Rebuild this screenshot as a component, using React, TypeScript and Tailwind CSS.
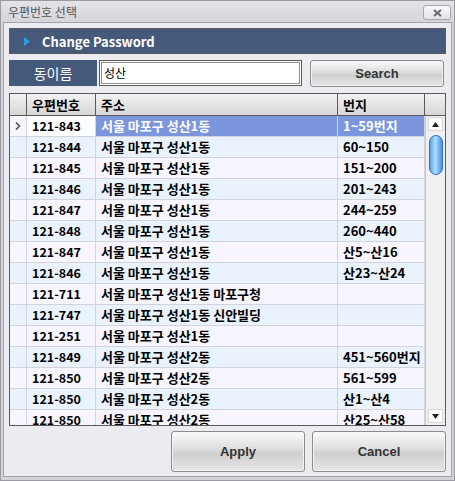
import React from "react";

type Row = { zip: string; addr: string; bunji: string };

const rows: Row[] = [
  { zip: "121-843", addr: "서울 마포구 성산1동", bunji: "1~59번지" },
  { zip: "121-844", addr: "서울 마포구 성산1동", bunji: "60~150" },
  { zip: "121-845", addr: "서울 마포구 성산1동", bunji: "151~200" },
  { zip: "121-846", addr: "서울 마포구 성산1동", bunji: "201~243" },
  { zip: "121-847", addr: "서울 마포구 성산1동", bunji: "244~259" },
  { zip: "121-848", addr: "서울 마포구 성산1동", bunji: "260~440" },
  { zip: "121-847", addr: "서울 마포구 성산1동", bunji: "산5~산16" },
  { zip: "121-846", addr: "서울 마포구 성산1동", bunji: "산23~산24" },
  { zip: "121-711", addr: "서울 마포구 성산1동 마포구청", bunji: "" },
  { zip: "121-747", addr: "서울 마포구 성산1동 신안빌딩", bunji: "" },
  { zip: "121-251", addr: "서울 마포구 성산1동", bunji: "" },
  { zip: "121-849", addr: "서울 마포구 성산2동", bunji: "451~560번지" },
  { zip: "121-850", addr: "서울 마포구 성산2동", bunji: "561~599" },
  { zip: "121-850", addr: "서울 마포구 성산2동", bunji: "산1~산4" },
  { zip: "121-850", addr: "서울 마포구 성산2동", bunji: "산25~산58" },
];

const btn =
  "flex items-center justify-center rounded-[3px] border border-[#8c8c8c] bg-[linear-gradient(#fbfbfb,#dcdcdc_45%,#cfcfcf_55%,#e6e6e6)] shadow-[inset_0_0_0_1px_#f4f4f4] font-['Liberation_Sans',sans-serif] font-bold text-[#333]";

function WinButton({ label, className }: { label: string; className: string }) {
  return <div className={`${btn} ${className}`}>{label}</div>;
}

export default function App() {
  return (
    <div className="w-[455px] h-[481px] flex flex-col bg-[#d2d2d7] border border-[#9a9aa2] font-['Noto_Sans_CJK_KR',sans-serif] overflow-hidden">
      {/* title bar */}
      <div className="h-[21px] flex items-center justify-between pl-[7px] pr-[3px] bg-[linear-gradient(#e4e4e8,#d4d4d9)]">
        <span className="text-[12px] text-[#555]">우편번호 선택</span>
        <div className="w-[28px] h-[15px] mt-[2px] rounded-[3px] border border-[#a6a6ae] bg-[linear-gradient(#fafafa,#e2e2e6)] flex items-center justify-center">
          <svg width="9" height="8" viewBox="0 0 9 8">
            <path d="M1 1L8 7M8 1L1 7" stroke="#6a6a70" strokeWidth="2" />
          </svg>
        </div>
      </div>

      {/* client area */}
      <div className="flex-1 mx-[2px] mb-[3px] border border-[#a4a4ac] bg-[#ebebf0] flex flex-col px-[5px] pt-[5px]">
        {/* header bar */}
        <div className="h-[26px] bg-[#455a7a] border border-[#5b5b63] flex items-center pl-[14px]">
          <svg width="6" height="9" viewBox="0 0 6 9">
            <path d="M0 0L6 4.5L0 9Z" fill="#2a9de6" />
          </svg>
          <span className="ml-[12px] text-[13px] font-bold text-white leading-none">Change Password</span>
        </div>

        {/* search row */}
        <div className="mt-[6px] flex items-start h-[28px]">
          <div className="w-[88px] h-[26px] bg-[#455a7a] flex items-center justify-center text-[14px] text-white">동이름</div>
          <div className="ml-[2px] w-[203px] h-[26px] bg-white border border-[#5a5a5a] shadow-[inset_0_0_0_1px_#fff,inset_0_0_0_2px_#8e8e8e] flex items-center pl-[4px] text-[12px] text-black">
            성산
          </div>
          <WinButton label="Search" className="ml-[8px] w-[134px] h-[27px] text-[13px]" />
        </div>

        {/* grid */}
        <div className="mt-[5px] h-[333px] border border-[#5a5a5a] bg-white flex flex-col overflow-hidden">
          <div className="h-[22px] flex shrink-0 bg-[linear-gradient(#f2f2f2,#d6d6d6)] text-[13px] font-bold text-black border-b border-[#5a5a5a]">
            <div className="w-[17px] border-r border-[#5a5a5a]" />
            <div className="w-[69px] border-r border-[#5a5a5a] pl-[5px] flex items-center">우편번호</div>
            <div className="w-[242px] border-r border-[#5a5a5a] pl-[5px] flex items-center">주소</div>
            <div className="w-[87px] border-r border-[#5a5a5a] pl-[5px] flex items-center">번지</div>
            <div className="flex-1" />
          </div>
          <div className="flex flex-1 min-h-0">
            <div className="w-[415px] overflow-hidden">
              {rows.map((r, i) => {
                const sel = i === 0;
                const bg = i % 2 === 0 ? "bg-[#f7f5fd]" : "bg-[#eaf2fc]";
                return (
                  <div key={i} className={`h-[21px] flex shrink-0 border-b border-[#d2d4dc] text-[13px] font-bold ${bg}`}>
                    <div className="w-[17px] border-r border-[#d2d4dc] flex items-center justify-center text-[#444]">
                      {sel && (
                        <svg width="6" height="8" viewBox="0 0 6 8">
                          <path d="M1 0.5L4.5 4L1 7.5" stroke="#555" strokeWidth="1.6" fill="none" />
                        </svg>
                      )}
                    </div>
                    <div className={`w-[69px] border-r border-[#d2d4dc] pl-[5px] flex items-center text-black text-[12.5px] ${sel ? "bg-white" : ""}`}>
                      {r.zip}
                    </div>
                    <div className={`w-[242px] border-r border-[#d2d4dc] pl-[5px] flex items-center whitespace-nowrap ${sel ? "bg-[#7b96dc] text-white" : "text-black"}`}>
                      {r.addr}
                    </div>
                    <div className={`w-[87px] border-r border-[#d2d4dc] pl-[5px] flex items-center whitespace-nowrap ${sel ? "bg-[#7b96dc] text-white" : "text-black"}`}>
                      {r.bunji}
                    </div>
                  </div>
                );
              })}
            </div>
            {/* scrollbar */}
            <div className="flex-1 bg-[#f0f0f2] border-l border-[#c8c8cc] flex flex-col items-center pt-[1px] pb-[2px]">
              <div className="w-[15px] h-[14px] bg-[#fbfbfb] border border-[#d8d8dc] flex items-center justify-center">
                <svg width="7" height="5" viewBox="0 0 7 5"><path d="M3.5 0L7 5H0Z" fill="#222" /></svg>
              </div>
              <div className="mt-[4px] w-[14px] h-[40px] rounded-full border border-[#2f6fc4] bg-[linear-gradient(90deg,#5fa2ee,#aee0ff_45%,#4a8ee6)]" />
              <div className="flex-1" />
              <div className="w-[15px] h-[14px] bg-[#fbfbfb] border border-[#d8d8dc] flex items-center justify-center">
                <svg width="7" height="5" viewBox="0 0 7 5"><path d="M0 0H7L3.5 5Z" fill="#222" /></svg>
              </div>
            </div>
          </div>
        </div>

        {/* buttons */}
        <div className="mt-[5px] flex justify-end gap-[7px]">
          <WinButton label="Apply" className="w-[134px] h-[41px] text-[13px]" />
          <WinButton label="Cancel" className="w-[134px] h-[41px] text-[13px]" />
        </div>
      </div>
    </div>
  );
}
